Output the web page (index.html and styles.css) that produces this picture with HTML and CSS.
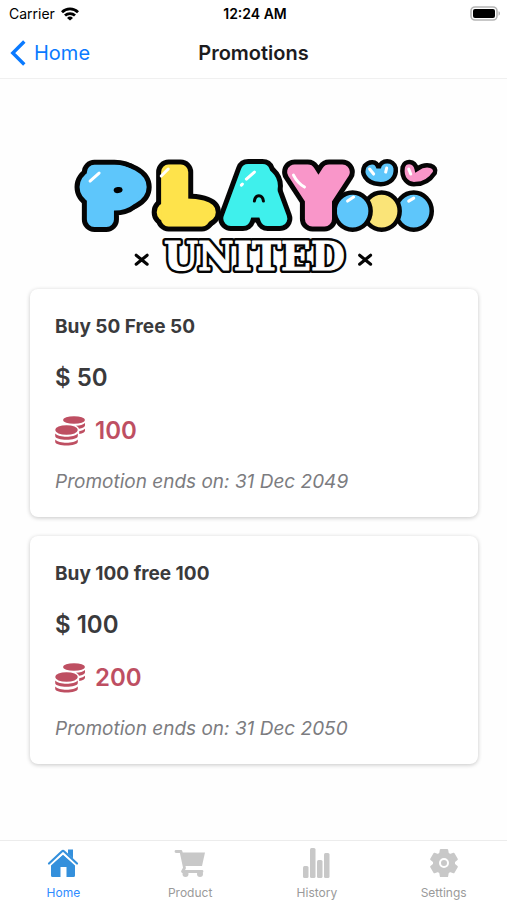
FILE: index.html
```
<!DOCTYPE html>
<html lang="en">
  <head>
    <meta charset="UTF-8" />
    <meta name="viewport" content="width=device-width, initial-scale=1.0" />
    <title>Promotions</title>
    <link rel="stylesheet" href="styles.css">
  </head>
  <body>
    <div class="status-bar">
      <div class="carrier">
        <span>Carrier</span>
        <svg width="18" height="14" viewBox="0 0 18 14" fill="none" stroke="#000" stroke-width="2.8">
          <path d="M1 5.2a11.4 11.4 0 0 1 16 0" />
          <path d="M4 8.6a7.2 7.2 0 0 1 10 0" />
          <path d="M9 13.6 6 10.9a4.3 4.3 0 0 1 6 0z" fill="#000" stroke="none" />
        </svg>
      </div>
      <span class="clock">12:24 AM</span>
      <svg class="battery" width="31" height="15" viewBox="0 0 31 15">
        <rect x="1" y="1" width="26" height="13" rx="4" fill="#fff" stroke="#b5b5b5" stroke-width="1.6" />
        <rect x="3" y="3" width="22" height="9" rx="2" />
        <path d="M28.5 5.3c2 .6 2 3.8 0 4.4z" fill="#b5b5b5" />
      </svg>
    </div>

    <header class="header">
      <a class="back" href="#">
        <svg width="16" height="26" viewBox="0 0 16 26" fill="none" stroke="#0a7aff" stroke-width="3.4">
          <path d="M14.3 1.5 2.8 13l11.5 11.5" />
        </svg>
        Home
      </a>
      <h1>Promotions</h1>
    </header>

    <main>
      <svg class="logo" viewBox="0 0 380 130" role="img" aria-label="Play United">
        <!-- balls and hearts behind the Y -->
        <g stroke="#050505" stroke-width="4.5">
          <ellipse cx="349" cy="61" rx="18" ry="18.5" fill="#5ec6fb" />
          <ellipse cx="317" cy="61" rx="18" ry="18.5" fill="#fae478" />
          <ellipse cx="288" cy="61" rx="18" ry="18.5" fill="#5ec6fb" />
          <path d="M314 18C312 10 304 11 300 16C296 23 301 33 314 34C326 35 332 27 331 18C329 9 316 9 314 18Z" fill="#5ec6fb" />
          <path d="M352 19C350 10 340 10 338 17C336 29 344 35 351 34C359 34 366 29 370 23C373 16 362 12 352 19Z" fill="#f996c9" />
        </g>

        <!-- balloon letters: black rim first, then the coloured body -->
        <g class="balloon">
          <g class="rim">
            <ellipse cx="193" cy="36" rx="13" ry="12" />
            <text x="191" y="69">A</text>
          </g>
          <g class="cyan">
            <ellipse cx="193" cy="36" rx="13" ry="12" />
            <text x="191" y="69">A</text>
          </g>
          <g class="rim">
            <ellipse cx="122" cy="62" rx="22" ry="6" />
            <text x="119" y="69">L</text>
          </g>
          <g class="yellow">
            <ellipse cx="122" cy="62" rx="22" ry="6" />
            <text x="119" y="69">L</text>
          </g>
          <g class="rim">
            <ellipse cx="49" cy="37" rx="26" ry="14" />
            <text x="48" y="69">P</text>
          </g>
          <g class="blue">
            <ellipse cx="49" cy="37" rx="26" ry="14" />
            <text x="48" y="69">P</text>
          </g>
          <g class="rim">
            <text x="254" y="69">Y</text>
          </g>
          <g class="pink">
            <text x="254" y="69">Y</text>
          </g>
        </g>
        <ellipse cx="54" cy="40" rx="4.5" ry="3" transform="rotate(-10 54 40)" />
        <path d="M190 51c1-7 8-7 9 0" fill="none" stroke="#050505" stroke-width="3" stroke-linecap="round" />

        <!-- shine -->
        <g fill="none" stroke="#fff" stroke-width="3" stroke-linecap="round">
          <path d="M26 31l9-8" />
          <path d="M97 26l7-7" />
          <path d="M177 35l1-1M182 29l8-7" />
          <path d="M229 25c3 6 6 9 11 12" />
          <path d="M283 51l6-4M305 19l4 5M322 18l-1 4M344 19l2 5M344 51l5-3" />
        </g>

        <g class="united">
          <text class="rim" x="190" y="120">UNITED</text>
          <text class="body" x="190" y="120">UNITED</text>
        </g>
        <path d="M72 105l11 9M83 105l-11 9M295 105l11 9M306 105l-11 9" fill="none" stroke="#050505" stroke-width="3" stroke-linecap="round" />
      </svg>

      <section class="card">
        <h2>Buy 50 Free 50</h2>
        <p class="price">$ 50</p>
        <p class="coins">
          <svg width="30" height="30" viewBox="0 0 30 30" fill="#be4f62">
            <ellipse cx="19" cy="4" rx="11" ry="3.8" />
            <path d="M30 7v2.5c0 1.5-2.5 2.7-6 3.2-.4-1.2-1.6-2.2-3.1-2.9C25 9.6 28.4 8.6 30 7z" />
            <path d="M30 12.8v2c0 1.6-2.3 2.8-5.8 3.3v-2.9c2.5-.4 4.6-1.2 5.8-2.4z" />
            <ellipse cx="11.5" cy="14" rx="11.3" ry="4.8" />
            <path d="M.2 17.6c4 4.3 18.6 4.3 22.6 0v2.3c0 5-22.6 5-22.6 0z" />
            <path d="M.2 23.4c4 4.3 18.6 4.3 22.6 0v2.4c0 5-22.6 5-22.6 0z" />
          </svg>
          100
        </p>
        <p class="ends">Promotion ends on: 31 Dec 2049</p>
      </section>

      <section class="card">
        <h2>Buy 100 free 100</h2>
        <p class="price">$ 100</p>
        <p class="coins">
          <svg width="30" height="30" viewBox="0 0 30 30" fill="#be4f62">
            <ellipse cx="19" cy="4" rx="11" ry="3.8" />
            <path d="M30 7v2.5c0 1.5-2.5 2.7-6 3.2-.4-1.2-1.6-2.2-3.1-2.9C25 9.6 28.4 8.6 30 7z" />
            <path d="M30 12.8v2c0 1.6-2.3 2.8-5.8 3.3v-2.9c2.5-.4 4.6-1.2 5.8-2.4z" />
            <ellipse cx="11.5" cy="14" rx="11.3" ry="4.8" />
            <path d="M.2 17.6c4 4.3 18.6 4.3 22.6 0v2.3c0 5-22.6 5-22.6 0z" />
            <path d="M.2 23.4c4 4.3 18.6 4.3 22.6 0v2.4c0 5-22.6 5-22.6 0z" />
          </svg>
          200
        </p>
        <p class="ends">Promotion ends on: 31 Dec 2050</p>
      </section>
    </main>

    <nav class="tabs">
      <a class="tab active" href="#">
        <svg width="32" height="32" viewBox="0 0 32 32" fill="currentColor">
          <path d="M21 2.500h5v9l-5-4.700z" />
          <path d="M16 7.5 28 17.500v11a1.500 1.500 0 0 1-1.500 1.500H19.500v-10h-6v10H5.500A1.500 1.500 0 0 1 4 28.500V17.500z" />
          <path d="M3 18.500 16 6.800l13 11.700" fill="none" stroke="#fff" stroke-width="1.300" />
          <path d="M2 16.500 14.800 4.500a1.800 1.800 0 0 1 2.400 0L30 16.500" fill="none" stroke="currentColor" stroke-width="2.200" stroke-linecap="round" />
        </svg>
        <span>Home</span>
      </a>
      <a class="tab" href="#">
        <svg width="32" height="32" viewBox="0 0 32 32" fill="currentColor">
          <path d="M7.5 5.5H31l-3 13.500H10.500z" />
          <path d="M2 4.500h5L10.500 21 8.500 24.500H28" fill="none" stroke="currentColor" stroke-width="2.800" stroke-linejoin="round" stroke-linecap="round" />
          <circle cx="11.5" cy="27" r="3" />
          <circle cx="26" cy="27" r="3" />
        </svg>
        <span>Product</span>
      </a>
      <a class="tab" href="#">
        <svg width="32" height="32" viewBox="0 0 32 32" fill="currentColor">
          <rect x="2" y="19" width="5.5" height="12" rx="1.5" />
          <rect x="9" y="1" width="5.5" height="30" rx="1.5" />
          <rect x="16" y="13" width="5.5" height="18" rx="1.5" />
          <rect x="23" y="6" width="5.5" height="25" rx="1.5" />
        </svg>
        <span>History</span>
      </a>
      <a class="tab" href="#">
        <svg width="32" height="32" viewBox="0 0 32 32" fill="currentColor">
          <circle cx="16" cy="16" r="11" />
          <g stroke="currentColor" stroke-width="2" stroke-linejoin="round">
            <path id="tooth" d="M12 8 12.8 3h6.4L20 8z" />
            <use href="#tooth" transform="rotate(60 16 16)" />
            <use href="#tooth" transform="rotate(120 16 16)" />
            <use href="#tooth" transform="rotate(180 16 16)" />
            <use href="#tooth" transform="rotate(240 16 16)" />
            <use href="#tooth" transform="rotate(300 16 16)" />
          </g>
          <circle cx="16" cy="16" r="4" fill="none" stroke="#fff" stroke-width="2" />
        </svg>
        <span>Settings</span>
      </a>
    </nav>
  </body>
</html>
```
FILE: styles.css
```
* {
  box-sizing: border-box;
}

body {
  margin: 0;
  min-height: 100vh;
  display: flex;
  flex-direction: column;
  background: #fefefe;
  color: #3a3a3c;
  font-family: Inter, "Liberation Sans", sans-serif;
}

h1,
h2,
p {
  margin: 0;
}

a {
  text-decoration: none;
}

svg {
  display: block;
  flex: none;
}

.status-bar {
  display: grid;
  grid-template-columns: 1fr auto 1fr;
  align-items: center;
  height: 27px;
  padding: 0 6px 0 9px;
  background: #fff;
  color: #000;
  font-size: 14px;
}

.carrier {
  display: flex;
  align-items: center;
  gap: 6px;
}

.clock {
  font-weight: 600;
}

.battery {
  justify-self: end;
}

.header {
  display: grid;
  grid-template-columns: 1fr auto 1fr;
  align-items: center;
  height: 52px;
  padding: 0 10px;
  background: #fff;
  border-bottom: 1px solid #f0f0f0;
}

.back {
  display: flex;
  align-items: center;
  gap: 8px;
  color: #0a7aff;
  font-size: 20px;
}

h1 {
  color: #1c1c1e;
  font-size: 20px;
  font-weight: 600;
}

main {
  flex: 1;
  padding: 71px 29px 56px 30px;
}

.logo {
  width: 85%;
  margin: 0 auto 9px;
}

.balloon text,
.united text {
  text-anchor: middle;
  stroke-linejoin: round;
}

.balloon text {
  font-family: "DejaVu Sans", sans-serif;
  font-weight: bold;
  font-size: 64px;
}

.balloon g {
  stroke-width: 15px;
}

.balloon .rim {
  stroke: #050505;
  stroke-width: 25px;
}

.blue {
  fill: #5ec6fb;
  stroke: #5ec6fb;
}

.yellow {
  fill: #fee34b;
  stroke: #fee34b;
}

.cyan {
  fill: #3ff0ec;
  stroke: #3ff0ec;
}

.pink {
  fill: #f996c9;
  stroke: #f996c9;
}

.united text {
  font-family: "DejaVu Serif", serif;
  font-weight: bold;
  font-size: 39px;
}

.united .rim {
  stroke: #050505;
  stroke-width: 6px;
}

.united .body {
  fill: #fff;
  stroke: #fff;
  stroke-width: 1px;
}

.card {
  display: flex;
  flex-direction: column;
  gap: 21px;
  padding: 24px 25px 21px;
  background: #fff;
  border-radius: 8px;
  box-shadow: 0 1px 4px rgba(0, 0, 0, 0.22);
}

.card + .card {
  margin-top: 19px;
}

.card h2 {
  font-size: 19px;
  font-weight: 700;
  line-height: 28px;
}

.price,
.coins {
  font-size: 24px;
  font-weight: 600;
  line-height: 32px;
}

.coins {
  display: flex;
  align-items: center;
  gap: 10px;
  color: #be4f62;
}

.ends {
  color: #7c7c80;
  font-size: 19px;
  font-style: italic;
  line-height: 28px;
}

.tabs {
  display: flex;
  height: 60px;
  background: #fff;
  border-top: 1px solid #ececec;
}

.tab {
  flex: 1;
  display: flex;
  flex-direction: column;
  align-items: center;
  gap: 6px;
  padding-top: 6px;
  color: #c8c8c8;
  font-size: 12px;
}

.tab span {
  color: #9a9a9a;
}

.active {
  color: #3490dc;
}

.active span {
  color: #2f8cff;
}
```
